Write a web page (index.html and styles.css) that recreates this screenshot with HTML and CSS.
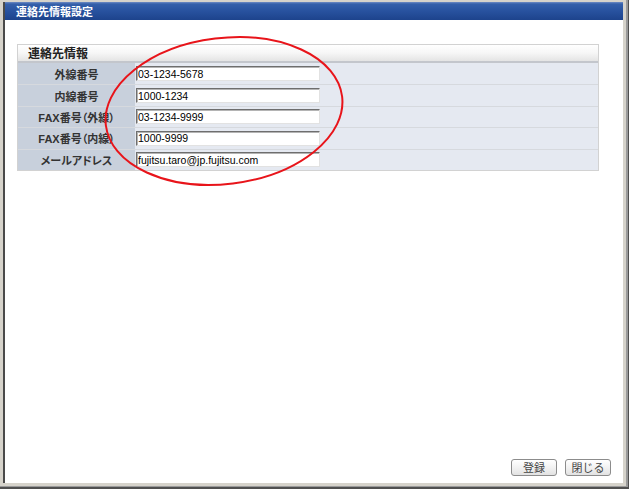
FILE: index.html
```html
<!DOCTYPE html>
<html lang="ja">
<head>
<meta charset="utf-8">
<title>連絡先情報設定</title>
<link rel="stylesheet" href="styles.css">
</head>
<body>
<div class="frame">
  <div class="window">
    <div class="titlebar">連絡先情報設定</div>
    <div class="content">
      <div class="panel">
        <div class="panel-head">連絡先情報</div>
        <div class="row">
          <div class="label">外線番号</div>
          <div class="value"><input class="field" type="text" value="03-1234-5678"></div>
        </div>
        <div class="row">
          <div class="label">内線番号</div>
          <div class="value"><input class="field" type="text" value="1000-1234"></div>
        </div>
        <div class="row">
          <div class="label">FAX番号（外線）</div>
          <div class="value"><input class="field" type="text" value="03-1234-9999"></div>
        </div>
        <div class="row">
          <div class="label">FAX番号（内線）</div>
          <div class="value"><input class="field" type="text" value="1000-9999"></div>
        </div>
        <div class="row">
          <div class="label">メールアドレス</div>
          <div class="value"><input class="field" type="text" value="fujitsu.taro@jp.fujitsu.com"></div>
        </div>
      </div>
      <div class="actions">
        <button class="btn" type="button">登録</button>
        <button class="btn" type="button">閉じる</button>
      </div>
    </div>
  </div>
  <svg class="annotation" width="629" height="489" viewBox="0 0 629 489">
    <ellipse cx="224" cy="111" rx="119" ry="73" transform="rotate(-7 224 111)" fill="none" stroke="#e8141a" stroke-width="2"/>
  </svg>
</div>
</body>
</html>
```

FILE: styles.css
```css
html, body {
  margin: 0;
  padding: 0;
}

body {
  width: 629px;
  height: 489px;
  overflow: hidden;
  font-family: "Liberation Sans", "Noto Sans CJK JP", sans-serif;
}

.frame {
  position: relative;
  width: 629px;
  height: 489px;
  box-sizing: border-box;
  padding: 2px 6px 6px 3px;
  background: #d6d3cb;
  box-shadow: inset -1px -2px 0 #505050, inset -3px -3px 0 #9a9a9a;
}

.window {
  height: 100%;
  box-sizing: border-box;
  border-left: 2px solid #4a4a4a;
  display: flex;
  flex-direction: column;
  background: #ffffff;
}

.titlebar {
  height: 18px;
  line-height: 18px;
  padding-left: 11px;
  color: #ffffff;
  font-family: "Noto Sans CJK JP", sans-serif;
  font-size: 11px;
  font-weight: 700;
  background: linear-gradient(to bottom, #6f8cc4 0, #3560aa 2px, #28529f 50%, #1d438c 100%);
}

.content {
  flex: 1;
  display: flex;
  flex-direction: column;
  padding: 24px 12px 7px 12px;
}

.panel {
  width: 582px;
  box-sizing: border-box;
  border: 1px solid #d2d2d2;
  background: #e5e9f1;
}

.panel-head {
  height: 16px;
  line-height: 16px;
  padding-left: 10px;
  font-family: "Noto Sans CJK JP", sans-serif;
  font-size: 12px;
  font-weight: 700;
  color: #222222;
  background: linear-gradient(to bottom, #ffffff 0, #f6f6f6 50%, #e4e4e4 100%);
  border-bottom: 2px solid #c3c6cc;
}

.row {
  display: grid;
  grid-template-columns: 117px 1fr;
  height: 21.4px;
  box-sizing: border-box;
}

.row + .row {
  border-top: 1px solid #d6d9de;
}

.label {
  display: flex;
  align-items: center;
  justify-content: center;
  background: #c8d0dc;
  font-family: "Liberation Sans", "Noto Sans CJK JP", sans-serif;
  font-feature-settings: "palt";
  font-size: 11px;
  font-weight: 700;
  color: #333333;
}

.value {
  display: flex;
  align-items: center;
  padding-left: 1px;
}

.field {
  width: 184px;
  height: 15px;
  box-sizing: border-box;
  margin: 0;
  padding: 0 1px;
  border: 1px solid;
  border-color: #6e6e6e #e2e2e2 #e2e2e2 #6e6e6e;
  box-shadow: inset 1px 1px 0 #b4b4b4;
  background: #ffffff;
  font-family: "Liberation Sans", sans-serif;
  font-size: 10.5px;
  color: #000000;
  outline: none;
}

.actions {
  margin-top: auto;
  display: flex;
  justify-content: flex-end;
  gap: 8px;
}

.btn {
  width: 46px;
  height: 17px;
  padding: 0;
  border: 1px solid #8c8c8c;
  border-radius: 3px;
  background: linear-gradient(to bottom, #ffffff 0, #f2f2f2 50%, #e2e2e2 100%);
  font-family: "Noto Sans CJK JP", sans-serif;
  font-size: 11px;
  line-height: 15px;
  color: #444444;
}

.annotation {
  position: absolute;
  top: 0;
  left: 0;
  pointer-events: none;
}
```
